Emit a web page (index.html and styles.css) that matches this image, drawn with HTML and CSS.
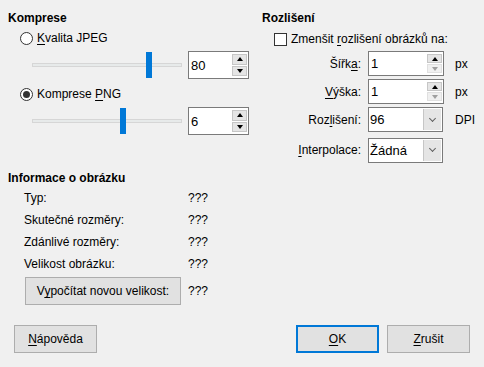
FILE: index.html
```html
<!DOCTYPE html>
<html lang="cs">
  <head>
    <meta charset="UTF-8" />
    <meta name="viewport" content="width=device-width, initial-scale=1.0" />
    <title>Komprese obrázku</title>
    <link rel="stylesheet" href="styles.css">
  </head>
  <body>
    <div class="dialog">
      <div class="top">
        <!-- komprese -->
        <section class="left">
          <h2 class="heading">Komprese</h2>
          <div class="radio-row">
            <span class="radio"></span>
            <span><u>K</u>valita JPEG</span>
          </div>
          <div class="slider-row">
            <div class="slider">
              <div class="track"></div>
              <div class="thumb" style="left: 114px"></div>
            </div>
            <div class="spin wide">
              <span class="spin-value">80</span>
              <span class="spin-btns">
                <span class="spin-up"></span>
                <span class="spin-down"></span>
              </span>
            </div>
          </div>
          <div class="radio-row second">
            <span class="radio checked"></span>
            <span>Komprese <u>P</u>NG</span>
          </div>
          <div class="slider-row">
            <div class="slider">
              <div class="track"></div>
              <div class="thumb" style="left: 88px"></div>
            </div>
            <div class="spin wide">
              <span class="spin-value">6</span>
              <span class="spin-btns">
                <span class="spin-up"></span>
                <span class="spin-down"></span>
              </span>
            </div>
          </div>
        </section>

        <!-- rozlišení -->
        <section class="right">
          <h2 class="heading">Rozlišení</h2>
          <div class="check-row">
            <span class="checkbox"></span>
            <span>Zmenšit <u>r</u>ozlišení obrázků na:</span>
          </div>
          <div class="form-grid">
            <span class="form-label">Šířk<u>a</u>:</span>
            <div class="spin narrow">
              <span class="spin-value">1</span>
              <span class="spin-btns">
                <span class="spin-up"></span>
                <span class="spin-down disabled"></span>
              </span>
            </div>
            <span class="unit">px</span>

            <span class="form-label"><u>V</u>ýška:</span>
            <div class="spin narrow">
              <span class="spin-value">1</span>
              <span class="spin-btns">
                <span class="spin-up"></span>
                <span class="spin-down disabled"></span>
              </span>
            </div>
            <span class="unit">px</span>

            <span class="form-label">Roz<u>l</u>išení:</span>
            <div class="select">
              <span class="select-value">96</span>
              <span class="select-btn"></span>
            </div>
            <span class="unit">DPI</span>

            <span class="form-label last"><u>I</u>nterpolace:</span>
            <div class="select last">
              <span class="select-value">Žádná</span>
              <span class="select-btn"></span>
            </div>
            <span class="unit last"></span>
          </div>
        </section>
      </div>

      <!-- informace -->
      <section class="info">
        <h2 class="heading">Informace o obrázku</h2>
        <div class="info-rows">
          <div class="info-row"><span class="info-label">Typ:</span><span>???</span></div>
          <div class="info-row"><span class="info-label">Skutečné rozměry:</span><span>???</span></div>
          <div class="info-row"><span class="info-label">Zdánlivé rozměry:</span><span>???</span></div>
          <div class="info-row"><span class="info-label">Velikost obrázku:</span><span>???</span></div>
        </div>
        <div class="calc-row">
          <button class="btn calc-btn">V<u>y</u>počítat novou velikost:</button>
          <span>???</span>
        </div>
      </section>

      <div class="footer">
        <button class="btn"><u>N</u>ápověda</button>
        <div class="footer-right">
          <button class="btn default"><u>O</u>K</button>
          <button class="btn"><u>Z</u>rušit</button>
        </div>
      </div>
    </div>
  </body>
</html>
```

FILE: styles.css
```css
body {
  margin: 0;
  background-color: #f0f0f0;
  font-family: "Liberation Sans", Arial, sans-serif;
  font-size: 12px;
  color: #000;
}

u {
  text-decoration-thickness: 1px;
  text-underline-offset: 2px;
}

.dialog {
  width: 484px;
  height: 367px;
  box-sizing: border-box;
  padding: 10px 8px 0 8px;
}

.top {
  display: flex;
  height: 152px;
}

.heading {
  margin: 0;
  font-size: 12px;
  font-weight: bold;
  line-height: 16px;
  height: 16px;
}

/* ---- komprese ---- */
.left {
  width: 254px;
}

.radio-row {
  display: flex;
  align-items: center;
  gap: 4px;
  height: 16px;
  margin-top: 4px;
  padding-left: 12px;
}

.radio-row.second {
  margin-top: 7px;
}

.radio {
  width: 11px;
  height: 11px;
  border: 1px solid #333;
  border-radius: 50%;
  background-color: #fff;
  position: relative;
}

.radio.checked::after {
  content: "";
  position: absolute;
  left: 2px;
  top: 2px;
  width: 7px;
  height: 7px;
  border-radius: 50%;
  background-color: #333;
}

.slider-row {
  display: flex;
  align-items: center;
  gap: 6px;
  height: 28px;
  margin-top: 5px;
  padding-left: 24px;
}

.slider {
  position: relative;
  width: 150px;
  height: 28px;
}

.track {
  position: absolute;
  left: 0;
  right: 0;
  top: 12px;
  height: 2px;
  background-color: #e7eaea;
  border: 1px solid #d6d6d6;
}

.thumb {
  position: absolute;
  top: 1px;
  width: 6px;
  height: 26px;
  background-color: #0078d7;
}

/* ---- spin / select ---- */
.spin,
.select {
  display: flex;
  align-items: center;
  box-sizing: border-box;
  background-color: #fff;
  border: 1px solid #7a7a7a;
}

.spin.wide {
  width: 61px;
  height: 28px;
}

.spin.narrow {
  width: 76px;
  height: 25px;
}

.spin-value,
.select-value {
  flex: 1;
  padding-left: 2px;
  font-size: 13px;
}

.spin-btns {
  display: flex;
  flex-direction: column;
  gap: 1px;
  width: 15px;
  align-self: stretch;
  padding: 2px 1px 2px 0;
}

.spin-up,
.spin-down {
  flex: 1;
  display: flex;
  align-items: center;
  justify-content: center;
  background-color: #e5e5e5;
  border: 1px solid #c6c6c6;
}

.spin-up::before {
  content: "";
  border-left: 3px solid transparent;
  border-right: 3px solid transparent;
  border-bottom: 4px solid #000;
}

.spin-down::before {
  content: "";
  border-left: 3px solid transparent;
  border-right: 3px solid transparent;
  border-top: 4px solid #000;
}

.spin-down.disabled {
  background-color: #f0f0f0;
  border-color: #e0e0e0;
}

.spin-down.disabled::before {
  border-top-color: #a0a0a0;
}

.select {
  width: 75px;
  height: 25px;
}

.select-value {
  padding-left: 1px;
}

.select-btn {
  width: 17px;
  align-self: stretch;
  margin: 1px;
  background-color: #e5e5e5;
  border-left: 1px solid #c6c6c6;
  display: flex;
  align-items: center;
  justify-content: center;
}

.select-btn::before {
  content: "";
  width: 4px;
  height: 4px;
  border-right: 1px solid #606060;
  border-bottom: 1px solid #606060;
  transform: rotate(45deg);
  margin-top: -3px;
}

/* ---- rozlišení ---- */
.right {
  flex: 1;
}

.check-row {
  display: flex;
  align-items: center;
  gap: 4px;
  height: 16px;
  margin-top: 5px;
  padding-left: 12px;
}

.checkbox {
  width: 11px;
  height: 11px;
  border: 1px solid #333;
  background-color: #fff;
}

.form-grid {
  display: grid;
  grid-template-columns: 99px 76px auto;
  grid-auto-rows: 25px;
  column-gap: 7px;
  row-gap: 3px;
  margin-top: 4px;
  align-items: center;
}

.form-label {
  text-align: right;
}

.form-label.last,
.select.last,
.unit.last {
  margin-top: 5px;
}

.unit {
  padding-left: 4px;
}

/* ---- informace ---- */
.info {
  margin-top: 8px;
}

.info-rows {
  margin-top: 1px;
}

.info-row {
  display: flex;
  align-items: center;
  height: 22px;
  padding-left: 16px;
}

.info-label {
  width: 164px;
}

.calc-row {
  display: flex;
  align-items: center;
  gap: 7px;
  margin-top: 2px;
  padding-left: 17px;
}

/* ---- tlačítka ---- */
.btn {
  box-sizing: border-box;
  width: 83px;
  height: 28px;
  background-color: #e1e1e1;
  border: 1px solid #adadad;
  font-family: inherit;
  font-size: 12px;
  color: #000;
  padding: 0;
}

.calc-btn {
  width: 156px;
}

.btn.default {
  border: 2px solid #0078d7;
}

.footer {
  display: flex;
  justify-content: space-between;
  margin-top: 20px;
  padding: 0 6px;
}

.footer-right {
  display: flex;
  gap: 8px;
}
```
